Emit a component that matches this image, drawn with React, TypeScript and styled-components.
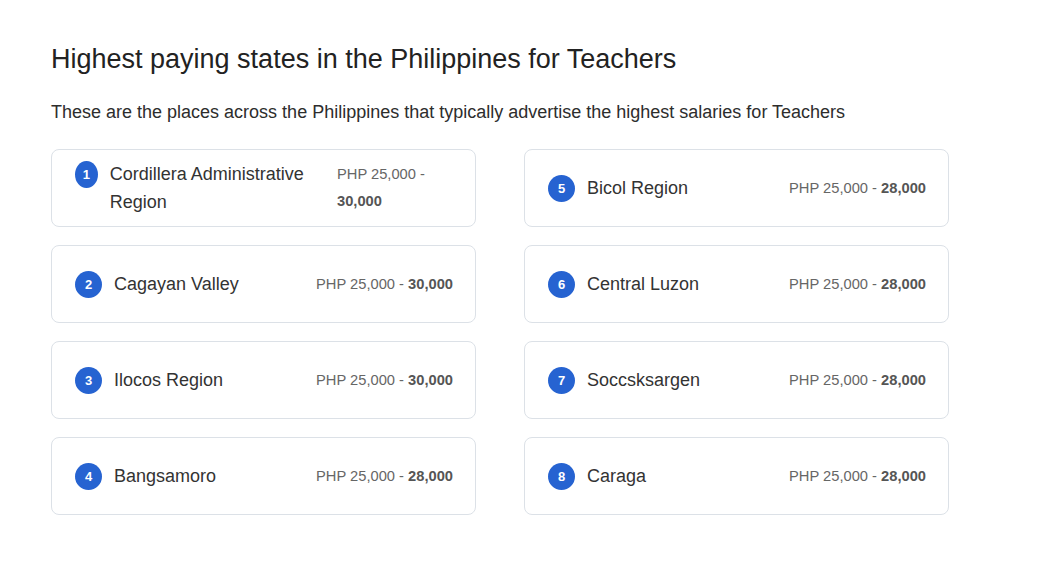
import styled, { createGlobalStyle } from 'styled-components'

const GlobalStyle = createGlobalStyle`
  body {
    margin: 0;
    background: #fff;
    font-family: "Liberation Sans", Arial, sans-serif;
  }
`

type Place = {
  rank: number
  name: string
  low: string
  high: string
}

const PLACES: Place[] = [
  { rank: 1, name: 'Cordillera Administrative Region', low: '25,000', high: '30,000' },
  { rank: 2, name: 'Cagayan Valley', low: '25,000', high: '30,000' },
  { rank: 3, name: 'Ilocos Region', low: '25,000', high: '30,000' },
  { rank: 4, name: 'Bangsamoro', low: '25,000', high: '28,000' },
  { rank: 5, name: 'Bicol Region', low: '25,000', high: '28,000' },
  { rank: 6, name: 'Central Luzon', low: '25,000', high: '28,000' },
  { rank: 7, name: 'Soccsksargen', low: '25,000', high: '28,000' },
  { rank: 8, name: 'Caraga', low: '25,000', high: '28,000' },
]

const Section = styled.section`
  padding: 41px 51px 0;
  width: 898px;
`

const Title = styled.h2`
  margin: 0;
  font-size: 27px;
  font-weight: 400;
  line-height: 36px;
  color: #222;
`

const Intro = styled.p`
  margin: 22px 0 0;
  font-size: 18px;
  line-height: 26px;
  color: #2d2d2d;
`

const Grid = styled.div`
  margin-top: 24px;
  display: grid;
  grid-template-columns: 425px 425px;
  grid-template-rows: repeat(4, 78px);
  grid-auto-flow: column;
  column-gap: 48px;
  row-gap: 18px;
`

const Card = styled.div`
  box-sizing: border-box;
  height: 78px;
  border: 1px solid #dce1e7;
  border-radius: 8px;
  padding: 0 22px 0 23px;
  display: flex;
  align-items: center;
  justify-content: space-between;
  gap: 12px;
`

const NameBlock = styled.div`
  display: flex;
  align-items: flex-start;
`

const Badge = styled.span`
  width: 27px;
  height: 27px;
  margin-top: 1px;
  border-radius: 50%;
  background: #2663d1;
  color: #fff;
  font-size: 13px;
  font-weight: 700;
  display: flex;
  align-items: center;
  justify-content: center;
`

const Name = styled.span`
  margin-left: 12px;
  font-size: 18px;
  line-height: 28px;
  color: #333;
`

const Salary = styled.span`
  font-size: 14.7px;
  line-height: 27px;
  color: #666;
  text-align: left;

  b {
    color: #555;
    font-weight: 700;
  }
`

const PlaceCard = ({ rank, name, low, high }: Place) => (
  <Card>
    <NameBlock>
      <Badge>{rank}</Badge>
      <Name>{name}</Name>
    </NameBlock>
    <Salary>
      PHP {low} - <b>{high}</b>
    </Salary>
  </Card>
)

const App = () => (
  <>
    <GlobalStyle />
    <Section>
      <Title>Highest paying states in the Philippines for Teachers</Title>
      <Intro>
        These are the places across the Philippines that typically advertise the
        highest salaries for Teachers
      </Intro>
      <Grid>
        {PLACES.map((p) => (
          <PlaceCard key={p.rank} {...p} />
        ))}
      </Grid>
    </Section>
  </>
)

export default App
